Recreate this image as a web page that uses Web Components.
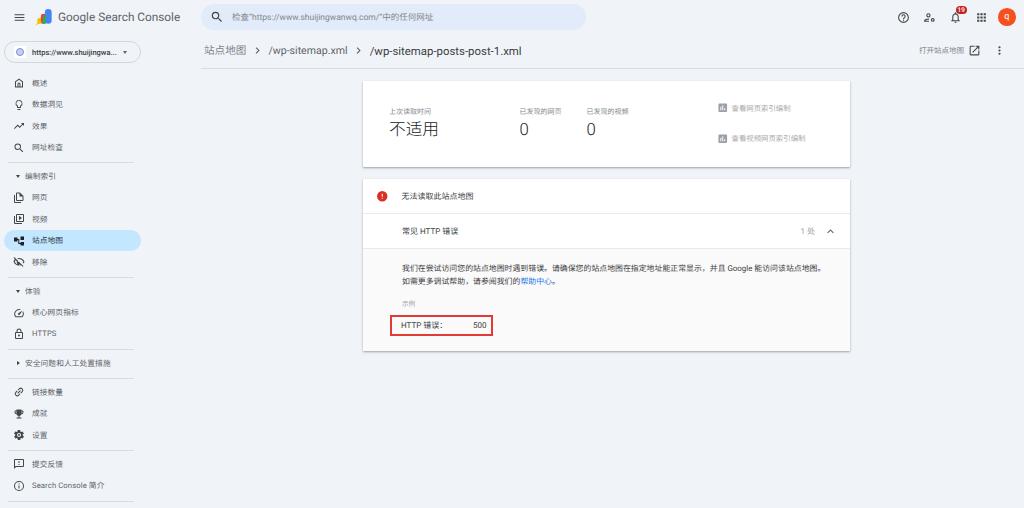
<!DOCTYPE html>
<html lang="zh-CN"><head><meta charset="utf-8"><title>Google Search Console</title>
<style>
html,body{margin:0;height:100%;overflow:hidden}
body{background:#f0f4f9;font-family:Roboto,"Noto Sans CJK SC",sans-serif;color:#3c4043;width:1024px;height:508px;text-rendering:geometricPrecision}
</style></head><body>
<gsc-app></gsc-app>
<script>
const FONT='Roboto,"Noto Sans CJK SC",sans-serif';
const icons={
menu:'<path d="M3 18h18v-2H3zm0-5h18v-2H3zm0-7v2h18V6z"/>',
search:'<path d="M15.500 14h-.79l-.28-.27A6.470 6.470 0 0 0 16 9.500 6.500 6.500 0 1 0 9.500 16c1.610 0 3.090-.59 4.230-1.570l.27.28v.79l5 4.990L20.490 19l-4.990-5zm-6 0C7.010 14 5 11.990 5 9.500S7.010 5 9.500 5 14 7.010 14 9.500 11.990 14 9.500 14z"/>',
home:'<path d="M12 3 4 9v12h16V9zm6 16h-3v-5a3 3 0 0 0-6 0v5H6v-9l6-4.500 6 4.500zm-7 0v-5a1 1 0 0 1 2 0v5z"/>',
bulb:'<path d="M9 21a1 1 0 0 0 1 1h4a1 1 0 0 0 1-1v-1H9zm3-19a7 7 0 0 0-4 12.700V17a1 1 0 0 0 1 1h6a1 1 0 0 0 1-1v-2.300A7 7 0 0 0 12 2zm2.900 11.100-.9.6V16h-4v-2.300l-.9-.6a5 5 0 1 1 5.800 0z"/>',
trend:'<path d="m16 6 2.300 2.300-4.900 4.900-4-4L2 16.600 3.400 18l6-6 4 4 6.300-6.300L22 12V6z"/>',
pages:'<path d="M4 6H2v14a2 2 0 0 0 2 2h12v-2H4zm10-5H8a2 2 0 0 0-2 2v13a2 2 0 0 0 2 2h11a2 2 0 0 0 2-2V8zm5 15H8V3h5v6h6z"/>',
video:'<path d="M4 6H2v14a2 2 0 0 0 2 2h14v-2H4zm16-4H8a2 2 0 0 0-2 2v12a2 2 0 0 0 2 2h12a2 2 0 0 0 2-2V4a2 2 0 0 0-2-2zm0 14H8V4h12zM12 5.500v9l6-4.500z"/>',
sitemap:'<path d="M2 5h7v3h3.500v8H15v-2h7v7h-7v-3h-4.500V10H9v3H2zM15 3h7v7h-7z"/>',
eyeoff:'<path d="M12 6a9.800 9.800 0 0 1 8.800 5.500c-.4.800-.9 1.500-1.500 2.100l1.400 1.400A11.800 11.800 0 0 0 23 11.500 11.800 11.800 0 0 0 8.600 4.600l1.700 1.700c.6-.2 1.100-.3 1.700-.3zM2.400 1.900 1 3.300l2.700 2.700A11.700 11.700 0 0 0 1 11.500a11.800 11.800 0 0 0 15.300 6.800l3.400 3.400 1.400-1.400zm7.500 7.500 2.600 2.600h-.5a2.500 2.500 0 0 1-2.100-2.600zM12 17a9.800 9.800 0 0 1-8.800-5.500c.6-1.200 1.400-2.200 2-3l2.700 2.700a4.500 4.500 0 0 0 5.900 5.900l1 1c-.9.300-1.900.5-2.800.5z"/>',
gauge:'<path d="M20.400 8.600 19 10a8 8 0 0 1-.8 8.500H5.800A8 8 0 0 1 14 6l1.400-1.400A10 10 0 0 0 4.100 19.500a2 2 0 0 0 1.700 1h12.400a2 2 0 0 0 1.700-1 10 10 0 0 0 .5-10.900zM10.600 15.400a2 2 0 0 0 2.800 0L19 7l-8.400 5.600a2 2 0 0 0 0 2.800z"/>',
lock:'<path d="M18 8h-1V6A5 5 0 0 0 7 6v2H6a2 2 0 0 0-2 2v10a2 2 0 0 0 2 2h12a2 2 0 0 0 2-2V10a2 2 0 0 0-2-2zM9 6a3 3 0 0 1 6 0v2H9zm9 14H6V10h12zm-6-3a2 2 0 1 0 0-4 2 2 0 0 0 0 4z"/>',
link:'<path d="M17 7h-4v2h4a3 3 0 0 1 0 6h-4v2h4a5 5 0 0 0 0-10zm-6 8H7a3 3 0 0 1 0-6h4V7H7a5 5 0 0 0 0 10h4zm-3-4h8v2H8z" transform="rotate(-45 12 12)"/>',
trophy:'<path d="M19 5h-2V3H7v2H5a2 2 0 0 0-2 2v1a5 5 0 0 0 4.400 5 5 5 0 0 0 3.600 2.900V19H7v2h10v-2h-4v-3.100a5 5 0 0 0 3.600-2.900A5 5 0 0 0 21 8V7a2 2 0 0 0-2-2zM5 8V7h2v3.800A3 3 0 0 1 5 8zm14 0a3 3 0 0 1-2 2.800V7h2z"/>',
gear:'<path d="M19.400 13a7.500 7.500 0 0 0 0-2l2.100-1.600a.5.5 0 0 0 .1-.6l-2-3.500a.5.5 0 0 0-.6-.2l-2.500 1a7.300 7.300 0 0 0-1.700-1l-.4-2.600a.5.5 0 0 0-.5-.4h-4a.5.5 0 0 0-.5.400l-.4 2.600a7.700 7.700 0 0 0-1.700 1l-2.500-1a.5.5 0 0 0-.6.200l-2 3.500a.5.5 0 0 0 .1.600L4.600 11a7.900 7.900 0 0 0 0 2l-2.100 1.600a.5.5 0 0 0-.1.600l2 3.500a.5.5 0 0 0 .6.200l2.500-1c.5.400 1.100.7 1.700 1l.4 2.600a.5.5 0 0 0 .5.400h4a.5.5 0 0 0 .5-.4l.4-2.600a7.300 7.300 0 0 0 1.700-1l2.500 1a.5.5 0 0 0 .6-.2l2-3.500a.5.5 0 0 0-.1-.6zM12 16a4 4 0 1 1 0-8 4 4 0 0 1 0 8zm0-6a2 2 0 1 0 0 4 2 2 0 0 0 0-4z"/>',
feedback:'<path d="M20 2H4a2 2 0 0 0-2 2v18l4-4h14a2 2 0 0 0 2-2V4a2 2 0 0 0-2-2zm0 14H5.200L4 17.200V4h16zM11 12h2v2h-2zm0-6h2v4h-2z"/>',
info:'<path d="M11 7h2v2h-2zm0 4h2v6h-2zm1-9a10 10 0 1 0 0 20 10 10 0 0 0 0-20zm0 18a8 8 0 1 1 0-16 8 8 0 0 1 0 16z"/>',
help:'<path d="M11 18h2v-2h-2zm1-16a10 10 0 1 0 0 20 10 10 0 0 0 0-20zm0 18a8 8 0 1 1 0-16 8 8 0 0 1 0 16zm0-14a4 4 0 0 0-4 4h2a2 2 0 0 1 4 0c0 2-3 1.800-3 5h2c0-2.300 3-2.500 3-5a4 4 0 0 0-4-4z"/>',
users:'<path d="M10 12a4 4 0 1 0 0-8 4 4 0 0 0 0 8zm0-6a2 2 0 1 1 0 4 2 2 0 0 1 0-4zM2 20v-2c0-2.700 5.300-4 8-4h1v2h-1c-2.700 0-5.800 1.300-6 2h7v2zM18 13a3.500 3.500 0 1 0 0 7 3.500 3.500 0 0 0 0-7zm0 5a1.500 1.500 0 1 1 0-3 1.500 1.500 0 0 1 0 3z"/>',
bell:'<path d="M12 22a2 2 0 0 0 2-2h-4a2 2 0 0 0 2 2zm6-6v-5c0-3.100-1.600-5.600-4.500-6.300V4a1.500 1.500 0 0 0-3 0v.7C7.600 5.400 6 7.900 6 11v5l-2 2v1h16v-1zm-2 1H8v-6c0-2.500 1.500-4.500 4-4.500s4 2 4 4.500z"/>',
apps:'<path d="M4 8h4V4H4zm6 12h4v-4h-4zm-6 0h4v-4H4zm0-6h4v-4H4zm6 0h4v-4h-4zm6-10v4h4V4zm-6 4h4V4h-4zm6 6h4v-4h-4zm0 6h4v-4h-4z"/>',
open:'<path d="M19 19H5V5h7V3H5a2 2 0 0 0-2 2v14a2 2 0 0 0 2 2h14a2 2 0 0 0 2-2v-7h-2zM14 3v2h3.600l-9.800 9.800 1.400 1.400L19 6.400V10h2V3z"/>',
more:'<path d="M12 8a2 2 0 1 0 0-4 2 2 0 0 0 0 4zm0 2a2 2 0 1 0 0 4 2 2 0 0 0 0-4zm0 6a2 2 0 1 0 0 4 2 2 0 0 0 0-4z"/>',
chart:'<path d="M19 3H5a2 2 0 0 0-2 2v14a2 2 0 0 0 2 2h14a2 2 0 0 0 2-2V5a2 2 0 0 0-2-2zM9 17H7v-7h2zm4 0h-2V7h2zm4 0h-2v-4h2z"/>',
up:'<path d="M7.400 15.400 12 10.800l4.600 4.600L18 14l-6-6-6 6z"/>',
chev:'<path d="M8.600 16.600 13.200 12 8.600 7.400 10 6l6 6-6 6z"/>',
error:'<path d="M12 2a10 10 0 1 0 0 20 10 10 0 0 0 0-20zm1 15h-2v-2h2zm0-4h-2V7h2z"/>'
};
function def(name,css,html,extra){
  customElements.define(name,class extends HTMLElement{
    constructor(){super();const r=this.attachShadow({mode:'open'});r.innerHTML='<style>'+css+'</style>'+(typeof html==='function'?html(this):html);}
    connectedCallback(){if(extra)extra(this);}
  });
}
def('gsc-icon',':host{display:inline-flex;width:var(--s,13px);height:var(--s,13px);flex:none;color:inherit}svg{width:100%;height:100%;fill:currentColor;display:block}','',el=>{
  el.shadowRoot.innerHTML+='<svg viewBox="0 0 24 24">'+icons[el.getAttribute('name')]+'</svg>';
});
def('gsc-nav-item',`:host{display:flex;align-items:center;height:21.4px;margin:0 4px;width:137px;border-radius:11px;padding-left:9px;box-sizing:border-box;gap:7px;font-size:7.700px;letter-spacing:.1px;color:#5f6368;--s:12px;white-space:nowrap}
:host([active]){background:#c2e7ff;color:#1f2f3a}
::slotted(gsc-icon){color:#444746}:host([active]) ::slotted(gsc-icon){color:#202124}`,'<slot name="i"></slot><slot></slot>');
def('gsc-nav-head',`:host{display:flex;align-items:center;height:21px;padding-left:16px;gap:5px;font-size:7.700px;letter-spacing:.1px;color:#5f6368}
i{width:0;height:0;display:block}
:host([open]) i{border-left:2.500px solid transparent;border-right:2.500px solid transparent;border-top:3px solid #444}
:host(:not([open])) i{border-top:2.500px solid transparent;border-bottom:2.500px solid transparent;border-left:3px solid #444;margin-left:1px}`,'<i></i><slot></slot>');
def('gsc-rule',':host{display:block;height:1px;background:#dadce0;margin:4px 0 3px 8px;width:126px}','');
def('gsc-logo',`:host{display:flex;align-items:center;gap:5px}
span{font:400 11.800px Roboto,sans-serif;color:#5f6368;white-space:nowrap}
svg{width:18px;height:18px;display:block}`,
`<svg viewBox="0 0 20 20"><path d="M0 19.500 5 14l1.500 2.500z" fill="#fbbc04"/><rect x="2.500" y="11" width="6" height="6.500" rx="2.500" fill="#fbbc04"/><rect x="6.500" y="6.500" width="6" height="11" rx="3" fill="#ea4335"/><rect x="11" y="1" width="7.500" height="16.500" rx="3.700" fill="#4285f4"/><path d="M7.500 17.500h4.500l.5-10-3 1z" fill="#34a853"/></svg><span>Google Search Console</span>`);
def('gsc-topbar',`:host{display:flex;align-items:center;height:34px}
.left{width:201px;flex:none;display:flex;align-items:center}
.menu{--s:13px;margin-left:13px;color:#444746;margin-right:9px;display:flex}
.search{width:385px;height:26px;background:#e2ebf9;border-radius:13px;display:flex;align-items:center;box-sizing:border-box;padding-left:9px;gap:8px;--s:14px;font-size:8.500px;white-space:nowrap;color:#80868b}
.search gsc-icon{color:#444746}
.r{margin-left:auto;display:flex;align-items:center;--s:13px;color:#444746;padding-right:8.500px}
.btn{width:26px;display:flex;justify-content:center;position:relative}
.badge{position:absolute;left:13px;top:-5px;background:#c5221f;color:#fff;font-size:6.500px;line-height:8px;height:8px;border-radius:4px;padding:0 2px;font-weight:500}
.av{width:17.500px;height:17.500px;border-radius:50%;background:#f4511e;color:#fff;font-size:9px;display:flex;align-items:center;justify-content:center;margin-left:3.500px}`,
`<div class="left"><span class="menu"><gsc-icon name="menu"></gsc-icon></span><gsc-logo></gsc-logo></div>
<div class="search"><gsc-icon name="search"></gsc-icon><span>检查“https://www.shuijingwanwq.com/”中的任何网址</span></div>
<div class="r"><span class="btn"><gsc-icon name="help"></gsc-icon></span><span class="btn"><gsc-icon name="users"></gsc-icon></span><span class="btn"><gsc-icon name="bell"></gsc-icon><b class="badge">19</b></span><span class="btn"><gsc-icon name="apps"></gsc-icon></span><span class="av">q</span></div>`);
def('gsc-property',`:host{display:flex;align-items:center;width:137px;height:22px;margin:7px 0 9.700px 4px;border:1px solid #d3d7dc;border-radius:11px;box-sizing:border-box;font-size:7.500px;font-weight:500;color:#3c4043;padding-left:9px;white-space:nowrap}
.g{width:12px;height:12px;background:#fff;display:flex;align-items:center;justify-content:center;margin-right:6px}
.g i{width:6px;height:6px;border-radius:50%;border:1px solid #7a8ed8;background:#c6d0ee}
b{width:0;height:0;border-left:2.500px solid transparent;border-right:2.500px solid transparent;border-top:3px solid #5f6368;margin-left:6px}`,
`<span class="g"><i></i></span><span>https://www.shuijingwa...</span><b></b>`);
const N=(ic,t,a='')=>`<gsc-nav-item ${a}><gsc-icon slot="i" name="${ic}"></gsc-icon>${t}</gsc-nav-item>`;
def('gsc-sidebar',':host{display:block;width:201px;flex:none}',
`<gsc-property></gsc-property>`+N('home','概述')+N('bulb','数据洞见')+N('trend','效果')+N('search','网址检查')+
`<gsc-rule></gsc-rule><gsc-nav-head open>编制索引</gsc-nav-head>`+N('pages','网页')+N('video','视频')+N('sitemap','站点地图','active')+N('eyeoff','移除')+
`<gsc-rule></gsc-rule><gsc-nav-head open>体验</gsc-nav-head>`+N('gauge','核心网页指标')+N('lock','HTTPS')+
`<gsc-rule></gsc-rule><gsc-nav-head>安全问题和人工处置措施</gsc-nav-head><gsc-rule></gsc-rule>`+N('link','链接数量')+N('trophy','成就')+N('gear','设置')+
`<gsc-rule></gsc-rule>`+N('feedback','提交反馈')+N('info','Search Console 简介')+`<gsc-rule></gsc-rule>`);
def('gsc-breadcrumb',`:host{display:flex;align-items:center;height:34.500px;border-bottom:1px solid #dadce0;box-sizing:border-box;font-size:10.600px;color:#5f6368;padding:0 18px 0 3px;white-space:nowrap}
.c{margin:0 4.500px;color:#5f6368;--s:13px}
.root{color:#80868b}
.cur{color:#3c4043;font-size:11.400px}
.a{margin-left:auto;display:flex;align-items:center;font-size:7.500px;color:#80868b;gap:4px}
.a gsc-icon{color:#444746;--s:13px}.a .m{margin-left:8px}`,
`<span class="root">站点地图</span><gsc-icon class="c" name="chev"></gsc-icon><span>/wp-sitemap.xml</span><gsc-icon class="c" name="chev"></gsc-icon><span class="cur">/wp-sitemap-posts-post-1.xml</span>
<div class="a"><span>打开站点地图</span><gsc-icon name="open"></gsc-icon><gsc-icon class="m" name="more"></gsc-icon></div>`);
def('gsc-card',':host{display:block;width:487px;background:#fff;box-shadow:0 1px 2px rgba(60,64,67,.35),0 1px 3px rgba(60,64,67,.15);border-radius:1px}','<slot></slot>');
def('gsc-stat',`:host{display:flex;flex-direction:column}
.l{font-size:7px;color:#80868b;line-height:10px}
.v{font-size:16.700px;color:#202124;line-height:27px;font-weight:300}`,
el=>`<div class="l">${el.getAttribute('label')}</div><div class="v">${el.getAttribute('value')}</div>`);
def('gsc-summary',`:host{display:flex;height:86px;box-sizing:border-box;padding:26px 0 0 26px}
.s1{width:130.500px}.s2{width:67px}.s3{width:130px}
.links{display:flex;flex-direction:column;gap:20.500px;margin-top:-4px;--s:11.500px;color:#a9abae;font-size:7.400px}
.links div{display:flex;align-items:center;gap:3.500px;height:10px;white-space:nowrap}
.links gsc-icon{color:#9aa0a6}`,
`<gsc-stat class="s1" label="上次读取时间" value="不适用"></gsc-stat><gsc-stat class="s2" label="已发现的网页" value="0"></gsc-stat><gsc-stat class="s3" label="已发现的视频" value="0"></gsc-stat>
<div class="links"><div><gsc-icon name="chart"></gsc-icon>查看网页索引编制</div><div><gsc-icon name="chart"></gsc-icon>查看视频网页索引编制</div></div>`);
def('gsc-error',`:host{display:block;font-size:8px;color:#3c4043}
.t{display:flex;align-items:center;height:35px;padding:0 0 0 13px;gap:13px;--s:12.500px;border-bottom:1px solid #e8eaed;box-sizing:border-box}
.t gsc-icon{color:#d93025}
.h{display:flex;align-items:center;height:35px;padding:0 13px 0 39px;border-bottom:1px solid #e8eaed;box-sizing:border-box}
.h .n{margin-left:auto;color:#9aa0a6;margin-right:9px}.h gsc-icon{color:#5f6368;--s:13px}
.d{background:#fafafa;padding:13px 0 0 39px;height:102px;box-sizing:border-box}
.d p{margin:0;line-height:13px;white-space:nowrap;color:#3c4043;font-size:7.900px}
a{color:#1a73e8;text-decoration:none}
.e{font-size:6.600px;color:#9aa0a6;margin:11px 0 6px;line-height:10px}
.x{display:flex;justify-content:space-between;align-items:center;border:2px solid #e53935;margin-left:-12px;padding:0 4.500px 0 9px;box-sizing:border-box;width:103px;height:21px}`,
`<div class="t"><gsc-icon name="error"></gsc-icon><span>无法读取此站点地图</span></div>
<div class="h"><span>常见 HTTP 错误</span><span class="n">1 处</span><gsc-icon name="up"></gsc-icon></div>
<div class="d"><p>我们在尝试访问您的站点地图时遇到错误。请确保您的站点地图在指定地址能正常显示，并且 Google 能访问该站点地图。<br>如需更多调试帮助，请参阅我们的<a>帮助中心</a>。</p><div class="e">示例</div><div class="x"><span>HTTP 错误：</span><span>500</span></div></div>`);
def('gsc-app',`:host{display:block;font-family:${FONT}}
.b{display:flex}.m{flex:1;min-width:0}
.w{display:flex;flex-direction:column;gap:12px;margin:12.500px 0 0 162px;width:487px}`,
`<gsc-topbar></gsc-topbar><div class="b"><gsc-sidebar></gsc-sidebar><div class="m"><gsc-breadcrumb></gsc-breadcrumb><div class="w"><gsc-card><gsc-summary></gsc-summary></gsc-card><gsc-card><gsc-error></gsc-error></gsc-card></div></div></div>`);
</script>
</body></html>
